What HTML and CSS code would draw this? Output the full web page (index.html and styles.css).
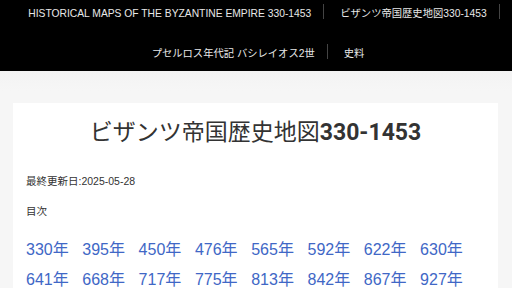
FILE: index.html
```html
<!DOCTYPE html>
<html lang="ja">
<head>
<meta charset="utf-8">
<title>ビザンツ帝国歴史地図330-1453</title>
<link rel="stylesheet" href="styles.css">
</head>
<body>
<header class="site-header">
  <nav>
    <ul class="menu">
      <li><a href="#">HISTORICAL MAPS OF THE BYZANTINE EMPIRE 330-1453</a></li>
      <li><a href="#">ビザンツ帝国歴史地図330-1453</a></li>
      <li><a href="#">プセルロス年代記 バシレイオス2世</a></li>
      <li><a href="#">史料</a></li>
    </ul>
  </nav>
</header>
<main class="page">
  <article class="card">
    <h1 class="title">ビザンツ帝国歴史地図<span class="num">330-1453</span></h1>
    <p class="updated">最終更新日:2025-05-28</p>
    <p class="toc-label">目次</p>
    <div class="years">
      <a href="#">330年</a><a href="#">395年</a><a href="#">450年</a><a href="#">476年</a>
      <a href="#">565年</a><a href="#">592年</a><a href="#">622年</a><a href="#">630年</a>
      <a href="#">641年</a><a href="#">668年</a><a href="#">717年</a><a href="#">775年</a>
      <a href="#">813年</a><a href="#">842年</a><a href="#">867年</a><a href="#">927年</a>
    </div>
  </article>
</main>
</body>
</html>
```
FILE: styles.css
```css
* { box-sizing: border-box; }
html, body { margin: 0; padding: 0; }
body {
  background: #f6f6f6;
  font-family: "Liberation Sans", Arial, "Noto Sans CJK JP", sans-serif;
  color: #333;
}
.site-header {
  background: #000;
  padding: 4px 0 12px;
}
.menu {
  list-style: none;
  margin: 0;
  padding: 0;
  display: flex;
  flex-wrap: wrap;
  justify-content: center;
  row-gap: 25px;
}
.menu li {
  height: 15px;
  line-height: 15px;
  padding: 0 12px 0 16px;
  border-right: 1px solid #444;
}
.menu li:last-child { border-right: none; }
.menu a {
  color: #e8e8e8;
  text-decoration: none;
  font-size: 10.3px;
}
.page {
  padding: 32px 14px 0 13px;
  background: linear-gradient(#f3f3f3, #f6f6f6 20px);
}
.card {
  background: #fff;
  padding: 13px 13px 0;
  min-height: 200px;
}
.title {
  margin: 0;
  text-align: center;
  font-family: "Noto Sans CJK JP", sans-serif;
  font-weight: 400;
  font-size: 23px;
  line-height: 28px;
  color: #333;
}
.title .num {
  font-family: Roboto, "Liberation Sans", sans-serif;
  font-weight: 700;
}
.updated {
  margin: 27px 0 0;
  font-size: 10.5px;
  line-height: 14px;
}
.toc-label {
  margin: 16px 0 0;
  font-size: 10.5px;
  line-height: 14px;
  font-family: "Noto Sans CJK JP", sans-serif;
}
.years {
  margin-top: 22px;
  display: grid;
  grid-template-columns: repeat(8, 56.3px);
  row-gap: 11px;
}
.years a {
  color: #4067c6;
  text-decoration: none;
  font-size: 16px;
  line-height: 19px;
  white-space: nowrap;
}
```
